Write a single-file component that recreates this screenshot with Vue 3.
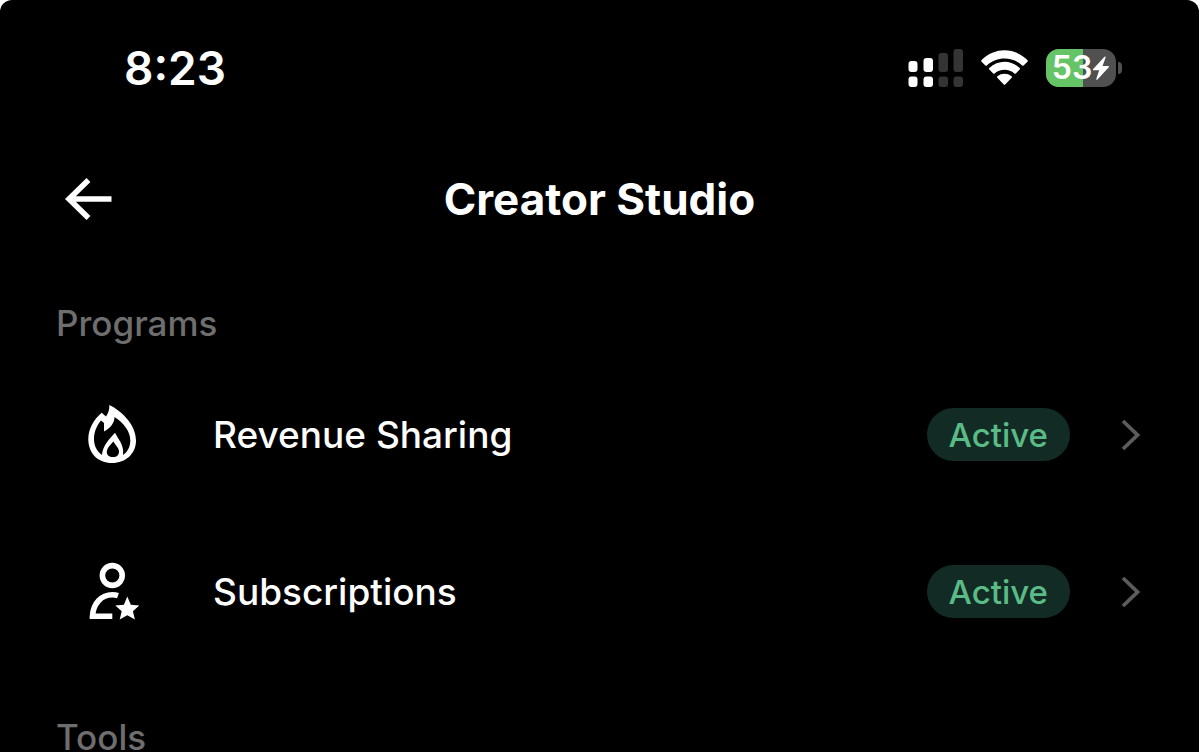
<script setup>
const programs = [
  { name: 'Revenue Sharing', status: 'Active', icon: 'flame' },
  { name: 'Subscriptions', status: 'Active', icon: 'member' }
]
const battery = 53
</script>

<template>
  <div class="screen">
    <div class="status-bar">
      <time class="clock">8:23</time>
      <div class="indicators">
        <svg class="signal" viewBox="0 0 56 40" aria-label="Signal">
          <g fill="#fff">
            <rect x="0.5" y="13" width="9" height="11" rx="3" />
            <rect x="0.5" y="28.500" width="9" height="10.5" rx="3" />
            <rect x="15.5" y="10" width="9.500" height="14" rx="3" />
            <rect x="15.5" y="28.500" width="9.500" height="10.5" rx="3" />
          </g>
          <g fill="#343434">
            <rect x="30.5" y="5" width="9.5" height="19" rx="3" />
            <rect x="30.5" y="28.500" width="9.5" height="10.5" rx="3" />
            <rect x="45.5" y="1" width="9.5" height="23" rx="3" />
            <rect x="45.5" y="28.500" width="9.5" height="10.5" rx="3" />
          </g>
        </svg>
        <svg class="wifi" viewBox="0 0 48 36" aria-label="Wi-Fi">
          <g fill="#fff">
            <path d="M.6 11.800Q-.2 11 .6 10.100C13.500-3 33.500-3 46.400 10.100Q47.200 11 46.400 11.800L42.600 15.500Q42 16.100 41.200 15.400C31 6.200 16 6.200 5.800 15.400Q5 16.100 4.400 15.500Z" />
            <path d="M8.300 19.600Q7.500 18.800 8.300 18C17 9.800 30 9.800 38.700 18Q39.500 18.800 38.700 19.600L34.800 23.500Q34.200 24.100 33.400 23.400C28 18.600 19 18.600 13.600 23.400Q12.800 24.100 12.200 23.500Z" />
            <path d="M16.300 27.800Q15.500 27 16.400 26.300C20.500 23 26.500 23 30.600 26.300Q31.500 27 30.700 27.800L24.200 34.400Q23.500 35 22.800 34.400Z" />
          </g>
        </svg>
        <div class="battery">
          <div class="battery-body">
            <div class="battery-fill" :style="{ width: battery + '%' }"></div>
            <span class="battery-label">{{ battery }}</span>
            <svg class="bolt" viewBox="0 0 18 25" aria-label="Charging">
              <path d="M12.500.8 1 13.200Q.3 14.200 1.400 14.300H7.200L4.300 22.700Q4 24.500 5.500 23.400L16.800 11.200Q17.500 10.100 16.300 10H10.500L13.500 2Q13.900 0 12.500.8Z" fill="#fff" />
            </svg>
          </div>
          <div class="battery-tip"></div>
        </div>
      </div>
    </div>

    <header class="header">
      <button class="back" type="button" aria-label="Back">
        <svg viewBox="0 0 48 42">
          <path d="M23.500 2 4 21 23.500 40M4 21H46.500" fill="none" stroke="#fff" stroke-width="5.600" />
        </svg>
      </button>
      <h1 class="title">Creator Studio</h1>
    </header>

    <main>
      <h2 class="section-title">Programs</h2>
      <a v-for="item in programs" :key="item.name" class="row" href="#">
        <svg v-if="item.icon === 'flame'" class="row-icon" viewBox="0 0 56 60">
          <path d="M25.300 0C38 6 52 20 52 35.500C52 48.500 42 58 28 58S4.300 48.500 4.300 34C4.300 24 9.500 14.500 17.700 7.700L22 11.500C24.500 8 25.500 4 25.300 0ZM17 15.500C12.500 21 10 27 10 34C10 41 13 46.500 18 50C18.500 41 25 34 31 27.700C34 34 40.500 40 39 50C43.500 47 46.300 42 46.300 35.500C46.300 26 39.500 18 30.500 12C30.500 18 26 23.500 20 26.500V18ZM29.500 36.500C26 40 22.800 43.500 22.800 47C22.800 50 25 52 29 52S35 50 35 46.500C35 43 31.500 40.500 29.500 36.500Z" fill="#fff" fill-rule="evenodd" />
        </svg>
        <svg v-else class="row-icon" viewBox="0 0 56 60">
          <circle cx="28.300" cy="13.500" r="9.900" fill="none" stroke="#fff" stroke-width="5.600" />
          <path d="M28.300 54.300H8.500C9 41.500 17.500 32.800 28.300 32.800C30.500 32.800 32.500 33.100 34 33.600" fill="none" stroke="#fff" stroke-width="5.600" />
          <path d="M43.300 34.500 46.800 42.700 55.300 43.500 48.900 49.200 50.900 57.600 43.300 53.200 35.700 57.600 37.700 49.200 31.300 43.500 39.900 42.700Z" fill="#fff" />
        </svg>
        <span class="row-name">{{ item.name }}</span>
        <span class="badge">{{ item.status }}</span>
        <svg class="chevron" viewBox="0 0 20 32">
          <path d="M2 2 16.500 16 2 30" fill="none" stroke="#5c5c5c" stroke-width="3.800" />
        </svg>
      </a>
      <h2 class="section-title">Tools</h2>
    </main>
  </div>
</template>

<style>
html {
  background: #fff;
  scrollbar-width: none;
}
body {
  margin: 0;
}
</style>

<style scoped>
.screen {
  box-sizing: border-box;
  min-height: 100vh;
  background: #000;
  color: #fff;
  border-radius: 12px 12px 0 0;
  font-family: Inter, "Liberation Sans", sans-serif;
}
.status-bar {
  display: flex;
  align-items: center;
  justify-content: space-between;
  height: 136px;
  padding: 0 77px 0 124px;
}
.clock {
  font-size: 46px;
  line-height: 56px;
  font-weight: 600;
}
.indicators {
  display: flex;
  align-items: center;
  gap: 17px;
}
.signal {
  width: 56px;
  height: 40px;
}
.wifi {
  width: 48px;
  height: 36px;
}
.battery {
  display: flex;
  align-items: center;
  gap: 2px;
}
.battery-body {
  position: relative;
  display: flex;
  align-items: center;
  justify-content: center;
  width: 70px;
  height: 38px;
  border-radius: 13px;
  background: #505050;
  overflow: hidden;
}
.battery-fill {
  position: absolute;
  inset: 0 auto 0 0;
  background: #65c466;
}
.battery-label {
  position: relative;
  font-size: 32px;
  line-height: 38px;
  font-weight: 600;
}
.bolt {
  position: relative;
  width: 18px;
  height: 25px;
}
.battery-tip {
  width: 4px;
  height: 12px;
  border-radius: 0 4px 4px 0;
  background: #505050;
}
.header {
  display: grid;
  grid-template-columns: 48px 1fr 48px;
  align-items: center;
  height: 126px;
  padding: 0 65px;
}
.back {
  display: flex;
  padding: 0;
  border: 0;
  background: none;
}
.back svg {
  width: 48px;
  height: 42px;
}
.title {
  margin: 0;
  text-align: center;
  font-size: 44px;
  line-height: 56px;
  font-weight: 700;
}
.section-title {
  margin: 0;
  padding: 38px 56px 10px;
  color: #6e6e6e;
  font-size: 35px;
  line-height: 46px;
  font-weight: 500;
}
.row + .section-title {
  padding-top: 44px;
}
.row {
  display: flex;
  align-items: center;
  height: 157px;
  padding: 0 58px 0 84px;
  color: #fff;
  text-decoration: none;
}
.row-icon {
  width: 56px;
  height: 60px;
}
.row-name {
  flex: 1;
  margin-left: 73px;
  font-size: 37px;
  line-height: 46px;
  font-weight: 500;
}
.badge {
  box-sizing: border-box;
  min-width: 143px;
  padding: 5px 22px 4px;
  border-radius: 27px;
  background: #122b24;
  color: #5abb87;
  text-align: center;
  font-size: 33px;
  line-height: 44px;
  font-weight: 500;
}
.chevron {
  width: 20px;
  height: 32px;
  margin-left: 51px;
}
</style>
